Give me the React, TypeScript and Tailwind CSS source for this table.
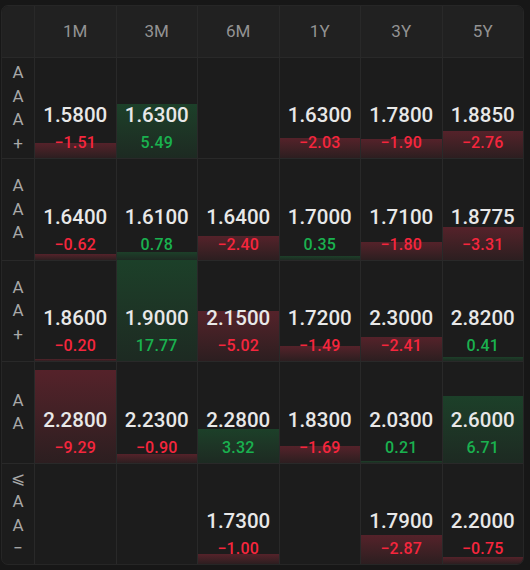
const cols = ["1M", "3M", "6M", "1Y", "3Y", "5Y"];

type Cell = { v: string; c: number } | null;

const rows: { label: string[]; cells: Cell[] }[] = [
  {
    label: ["A", "A", "A", "+"],
    cells: [
      { v: "1.5800", c: -1.51 },
      { v: "1.6300", c: 5.49 },
      null,
      { v: "1.6300", c: -2.03 },
      { v: "1.7800", c: -1.9 },
      { v: "1.8850", c: -2.76 },
    ],
  },
  {
    label: ["A", "A", "A"],
    cells: [
      { v: "1.6400", c: -0.62 },
      { v: "1.6100", c: 0.78 },
      { v: "1.6400", c: -2.4 },
      { v: "1.7000", c: 0.35 },
      { v: "1.7100", c: -1.8 },
      { v: "1.8775", c: -3.31 },
    ],
  },
  {
    label: ["A", "A", "+"],
    cells: [
      { v: "1.8600", c: -0.2 },
      { v: "1.9000", c: 17.77 },
      { v: "2.1500", c: -5.02 },
      { v: "1.7200", c: -1.49 },
      { v: "2.3000", c: -2.41 },
      { v: "2.8200", c: 0.41 },
    ],
  },
  {
    label: ["A", "A"],
    cells: [
      { v: "2.2800", c: -9.29 },
      { v: "2.2300", c: -0.9 },
      { v: "2.2800", c: 3.32 },
      { v: "1.8300", c: -1.69 },
      { v: "2.0300", c: 0.21 },
      { v: "2.6000", c: 6.71 },
    ],
  },
  {
    label: ["⩽", "A", "A", "−"],
    cells: [
      null,
      null,
      { v: "1.7300", c: -1.0 },
      null,
      { v: "1.7900", c: -2.87 },
      { v: "2.2000", c: -0.75 },
    ],
  },
];

function fmt(c: number) {
  return c < 0 ? "−" + Math.abs(c).toFixed(2) : c.toFixed(2);
}

function DataCell({ cell }: { cell: Cell }) {
  return (
    <div className="relative border-l border-t border-[#292929] flex flex-col items-center justify-end pb-[5px]">
      {cell && (
        <>
          <div
            className={
              cell.c < 0
                ? "absolute left-0 right-0 bottom-0 bg-gradient-to-b from-[#55222a] to-[#2c1e20]"
                : "absolute left-0 right-0 bottom-0 bg-gradient-to-b from-[#1c4029] to-[#1d2a22]"
            }
            style={{ height: Math.min(Math.abs(cell.c) * 10, 101) }}
          />
          <div className="relative text-[20.5px] leading-[28px] font-medium text-[#e8e8e8] mb-[4px]">
            {cell.v}
          </div>
          <div
            className={
              "relative text-[16px] leading-[20px] font-medium tracking-[0.2px] " +
              (cell.c < 0 ? "text-[#f5263d]" : "text-[#1ab14f]")
            }
          >
            {fmt(cell.c)}
          </div>
        </>
      )}
    </div>
  );
}

export default function App() {
  return (
    <div className="w-[530px] h-[570px] bg-[#171717] pt-[5px] pl-[1px] font-['Roboto',sans-serif]">
      <div className="w-[523px] h-[560px] rounded-[7px] border border-[#262626] bg-[#1c1c1c] overflow-hidden grid grid-cols-[32px_repeat(6,1fr)] grid-rows-[51px_repeat(5,1fr)]">
        <div className="bg-[#212121]" />
        {cols.map((c) => (
          <div
            key={c}
            className="bg-[#212121] border-l border-[#292929] flex items-center justify-center text-[17px] text-[#939393]"
          >
            {c}
          </div>
        ))}
        {rows.map((r, i) => (
          <div key={i} className="contents">
            <div className="border-t border-[#292929] flex flex-col items-center justify-center text-[17px] leading-[23.5px] text-[#a8a8a8]">
              {r.label.map((l, j) => (
                <span key={j}>{l}</span>
              ))}
            </div>
            {r.cells.map((cell, j) => (
              <DataCell key={j} cell={cell} />
            ))}
          </div>
        ))}
      </div>
    </div>
  );
}
